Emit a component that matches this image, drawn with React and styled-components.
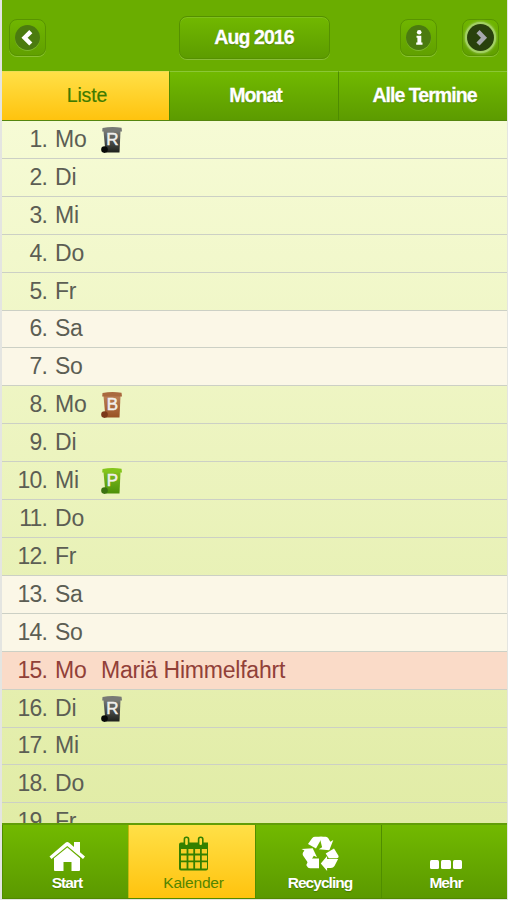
import styled, { createGlobalStyle } from "styled-components";

const days = [
  { name: "Mo", bin: "R" },
  { name: "Di" },
  { name: "Mi" },
  { name: "Do" },
  { name: "Fr" },
  { name: "Sa", weekend: true },
  { name: "So", weekend: true },
  { name: "Mo", bin: "B" },
  { name: "Di" },
  { name: "Mi", bin: "P" },
  { name: "Do" },
  { name: "Fr" },
  { name: "Sa", weekend: true },
  { name: "So", weekend: true },
  { name: "Mo", holiday: "Mariä Himmelfahrt" },
  { name: "Di", bin: "R" },
  { name: "Mi" },
  { name: "Do" },
  { name: "Fr" },
];

const binColors = {
  R: { lid: "#777975", top: "#777975", bottom: "#1e211d", wheel: "#080a08" },
  B: { lid: "#a9693f", top: "#bb8058", bottom: "#995123", wheel: "#7b3818" },
  P: { lid: "#83c51b", top: "#80bd20", bottom: "#4c9108", wheel: "#3b7310" },
};

const Bin = ({ type }) => {
  const c = binColors[type];
  return (
    <BinIcon viewBox="0 0 22 28">
      <defs>
        <linearGradient id={`bin${type}`} x1="0" y1="0" x2="0" y2="1">
          <stop offset="0" stopColor={c.top} />
          <stop offset="1" stopColor={c.bottom} />
        </linearGradient>
      </defs>
      <path d="M2.5 5h17l-1 21.5H4.5z" fill={`url(#bin${type})`} />
      <path d="M1.5 2Q11 .2 20.5 1.8L21 5.5H1.2z" fill={c.lid} />
      <circle cx="3.5" cy="23.6" r="3.3" fill={c.wheel} />
      <text x="11.5" y="19">
        {type}
      </text>
    </BinIcon>
  );
};

const HomeIcon = () => (
  <svg width="37" height="31" viewBox="0 0 37 31" fill="#fff">
    <path d="M25 1h6v14l-6-5z" />
    <path d="M.5 15.5L16.5 1.7q1.8-1.3 3.6 0L36 15.5 34 18 18.3 5 2.5 18z" />
    <path d="M5 17.2L18.3 6.4 31 17.2V29q0 1-1 1h-7.5v-9h-8v9H6q-1 0-1-1z" />
  </svg>
);

const CalendarIcon = () => (
  <svg width="32" height="36" viewBox="0 0 32 36">
    <path d="M2 6.5h28v26q0 2-2 2H3q-2 0-2-2v-24q0-2 2-2z" fill="#348000" />
    <path
      d="M3 13h5.6v4.6H3zM10.4 13h4.9v4.6h-4.9zM17.1 13H22v4.6h-4.9zM23.8 13H29v4.6h-5.2zM3 19.4h5.6v5H3zM10.4 19.4h4.9v5h-4.9zM17.1 19.4H22v5h-4.9zM23.8 19.4H29v5h-5.2zM3 26.2h5.6v6.2H3zM10.4 26.2h4.9v6.2h-4.9zM17.1 26.2H22v6.2h-4.9zM23.8 26.2H29v6.2h-5.2z"
      fill="#f6ce27"
    />
    <g fill="#ffdc39" stroke="#348000" strokeWidth="1.6">
      <rect x="6.4" y="1.3" width="4.2" height="8.5" rx="2" />
      <rect x="20.6" y="1.3" width="4.2" height="8.5" rx="2" />
    </g>
  </svg>
);

const RecycleIcon = () => (
  <svg width="38" height="36" viewBox="0 0 38 36" fill="#fff">
    <path d="M7 8L11.3 2Q12.3.8 14 .8h7.5L15 12.5z" />
    <path d="M18.5.8h6.3q1.6 0 2.5 1.5l2 3.4 3-1.7-4 10.2-10.5-1 3.3-2z" />
    <path d="M.5 13l11.2-.7 4.3 9-3.2-1.6-5 8.3-5.8-8.5q-.8-1.5 0-3l1.4-2z" />
    <path d="M8.3 22.5H18v9.8H9q-2.2 0-3.2-2.2l-.5-1.2z" />
    <path d="M19.8 27.5l6.3-7.6v3.2h11l-3.6 7q-1.2 1.9-3.6 1.9h-3.8V35z" />
    <path d="M24.7 17.6l8.3-5 4.3 6.9q1 2.5-1.5 2.7h-8z" />
  </svg>
);

const Chevron = ({ next }) => (
  <svg width="24" height="24" viewBox="0 0 24 24">
    <path
      d={next ? "M9 5.6l6 6.2-6 6.2" : "M14.8 5.6L8.6 11.8l6.2 6.2"}
      fill="none"
      stroke={next ? "#a6a8ae" : "#fff"}
      strokeWidth="4.4"
    />
  </svg>
);

const InfoIcon = () => (
  <svg width="24" height="24" viewBox="0 0 24 24" fill="#fff">
    <circle cx="12.2" cy="6.3" r="2.3" />
    <path d="M9.5 9.7h4.8v6.8h1.2v2.2H9.2v-2.2h1.2v-4.8h-.9z" />
  </svg>
);

const App = () => {
  return (
    <>
      <GlobalStyle />
      <Screen>
        <Header>
          <IconButton aria-label="Zurück">
            <Disc>
              <Chevron />
            </Disc>
          </IconButton>
          <MonthButton>Aug 2016</MonthButton>
          <Actions>
            <IconButton aria-label="Info">
              <Disc>
                <InfoIcon />
              </Disc>
            </IconButton>
            <IconButton aria-label="Weiter">
              <Disc $focused>
                <Chevron next />
              </Disc>
            </IconButton>
          </Actions>
        </Header>
        <Tabs>
          <Tab $active>Liste</Tab>
          <Tab>Monat</Tab>
          <Tab>Alle Termine</Tab>
        </Tabs>
        <DayList>
          {days.map((day, i) => (
            <DayRow key={i} $weekend={day.weekend} $holiday={day.holiday}>
              <DayNumber>{i + 1}.</DayNumber>
              <DayName>{day.name}</DayName>
              {day.bin && <Bin type={day.bin} />}
              {day.holiday}
            </DayRow>
          ))}
        </DayList>
        <BottomNav>
          <NavItem>
            <NavIcon>
              <HomeIcon />
            </NavIcon>
            Start
          </NavItem>
          <NavItem $active>
            <NavIcon>
              <CalendarIcon />
            </NavIcon>
            Kalender
          </NavItem>
          <NavItem>
            <NavIcon>
              <RecycleIcon />
            </NavIcon>
            Recycling
          </NavItem>
          <NavItem>
            <NavIcon>
              <Dots>
                <i />
                <i />
                <i />
              </Dots>
            </NavIcon>
            Mehr
          </NavItem>
        </BottomNav>
      </Screen>
    </>
  );
};

const GlobalStyle = createGlobalStyle`
  * {
    box-sizing: border-box;
  }

  body {
    margin: 0;
    background: #e4e5e1;
    font-family: "Liberation Sans", Arial, sans-serif;
  }
`;

const Screen = styled.div`
  display: flex;
  flex-direction: column;
  width: 508px;
  height: 900px;
  padding: 0 1px 1px 2px;
  overflow: hidden;
`;

const Header = styled.header`
  display: grid;
  grid-template-columns: 1fr 151px 1fr;
  align-items: center;
  flex: 0 0 71px;
  padding: 4px 8px 0 7px;
  background: #6aad00;
`;

const Actions = styled.div`
  display: flex;
  justify-content: flex-end;
  gap: 25px;
`;

const IconButton = styled.button`
  display: flex;
  align-items: center;
  justify-content: center;
  width: 37px;
  height: 37px;
  padding: 0;
  border: 1px solid #589400;
  border-radius: 8px;
  background: linear-gradient(#70b600, #61a000);
  box-shadow: 0 1px 0 #8bc134;
`;

const Disc = styled.span`
  display: flex;
  align-items: center;
  justify-content: center;
  width: ${({ $focused }) => ($focused ? "27px" : "25px")};
  height: ${({ $focused }) => ($focused ? "27px" : "25px")};
  border-radius: 50%;
  background: ${({ $focused }) => ($focused ? "#29410d" : "#4b7b0f")};
  box-shadow: ${({ $focused }) =>
    $focused ? "0 0 0 2px #a3d164, 0 0 3px 2px #b2d77c" : "0 1px 0 #7cb72a"};
`;

const MonthButton = styled.button`
  height: 43px;
  padding: 0 0 1px;
  border: 1px solid #559000;
  border-radius: 8px;
  background: linear-gradient(#71b800, #5d9c00);
  box-shadow: 0 1px 0 #89bd37, inset 0 1px 0 #7fc01c;
  color: #fff;
  font-family: inherit;
  font-size: 19.5px;
  font-weight: bold;
  letter-spacing: -0.9px;
  text-shadow: 0 1px 1px #477800;
  -webkit-text-stroke: 0.3px #fff;
`;

const Tabs = styled.nav`
  display: grid;
  grid-template-columns: 167px 169px 169px;
  flex: 0 0 50px;
  border-bottom: 1px solid #55860e;
`;

const Tab = styled.div`
  display: flex;
  align-items: center;
  justify-content: center;
  padding-bottom: 2px;
  padding-left: 3px;
  border-top: 1px solid ${({ $active }) => ($active ? "#eddd55" : "#8bc735")};
  border-left: ${({ $active }) => ($active ? "0" : "1px solid #4e8c00")};
  background: ${({ $active }) =>
    $active
      ? "linear-gradient(#ffe047, #ffc30e)"
      : "linear-gradient(#71b900, #5c9b00)"};
  color: ${({ $active }) => ($active ? "#3e7b00" : "#fff")};
  font-size: 19.5px;
  font-weight: ${({ $active }) => ($active ? "normal" : "bold")};
  letter-spacing: ${({ $active }) => ($active ? "-0.1px" : "-0.95px")};
  text-shadow: ${({ $active }) => ($active ? "none" : "0 1px 1px #477800")};
  -webkit-text-stroke: ${({ $active }) => ($active ? "0.2px" : "0.3px")};
`;

const DayList = styled.div`
  flex: 1;
  min-height: 0;
  overflow: hidden;
  background: linear-gradient(#f6fbd5, #e1eca6);
`;

const DayRow = styled.div`
  display: flex;
  align-items: center;
  height: 37.92px;
  border-bottom: 1px solid #ccd0c5;
  background: ${({ $weekend, $holiday }) =>
    $weekend ? "#fbf7e7" : $holiday ? "#fadbc8" : "transparent"};
  color: ${({ $holiday }) => ($holiday ? "#914038" : "#5c5e54")};
  font-size: 23px;
  letter-spacing: -0.22px;
  white-space: nowrap;
`;

const DayNumber = styled.span`
  width: 45px;
  text-align: right;
  letter-spacing: -0.8px;
`;

const DayName = styled.span`
  width: 45px;
  margin-left: 8px;
  margin-right: 1px;
`;

const BinIcon = styled.svg`
  width: 22px;
  height: 28px;
  margin-top: 1px;

  text {
    fill: #f0efed;
    font-size: 17px;
    letter-spacing: 0;
    stroke: #f0efed;
    stroke-width: 0.5px;
    text-anchor: middle;
  }
`;

const BottomNav = styled.nav`
  display: grid;
  grid-template-columns: 126px 127px 126px 126px;
  flex: 0 0 76px;
  border-top: 2px solid #619d08;
  border-bottom: 1px solid #518900;
`;

const NavItem = styled.div`
  display: flex;
  flex-direction: column;
  align-items: center;
  padding: 9px 0 0 3px;
  border-left: 1px solid ${({ $active }) => ($active ? "#c6b90c" : "#4f8d00")};
  background: ${({ $active }) =>
    $active
      ? "linear-gradient(#ffe047, #ffc30e)"
      : "linear-gradient(#72b900, #5b9900)"};
  color: ${({ $active }) => ($active ? "#548500" : "#fff")};
  font-size: 15.5px;
  font-weight: ${({ $active }) => ($active ? "normal" : "bold")};
  letter-spacing: ${({ $active }) => ($active ? "-0.2px" : "-0.95px")};
  line-height: 18px;
  text-shadow: ${({ $active }) => ($active ? "none" : "0 1px 1px #477800")};
`;

const NavIcon = styled.span`
  display: flex;
  align-items: flex-end;
  justify-content: center;
  height: 40px;
  padding-bottom: 2px;
`;

const Dots = styled.span`
  display: flex;
  gap: 2px;
  padding-bottom: 3px;

  i {
    width: 9.5px;
    height: 9px;
    border-radius: 1.5px;
    background: #fff;
  }
`;

export default App;
